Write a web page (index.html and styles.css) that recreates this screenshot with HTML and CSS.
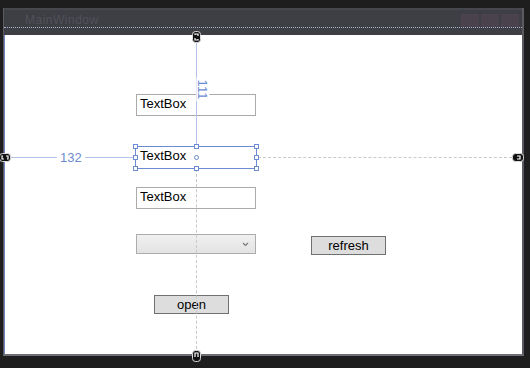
FILE: index.html
```html
<!DOCTYPE html>
<html lang="en">
<head>
  <meta charset="UTF-8" />
  <title>MainWindow - Designer</title>
  <link rel="stylesheet" href="styles.css">
</head>
<body>
  <div class="window">
    <div class="titlebar">
      <span class="title">MainWindow</span>
      <div class="caption-buttons">
        <span></span><span></span><span></span>
      </div>
    </div>
    <div class="client">
      <!-- controls on the canvas -->
      <div class="textbox tb1">TextBox</div>
      <div class="textbox tb2 selected">TextBox</div>
      <div class="textbox tb3">TextBox</div>
      <div class="combo">
        <svg class="chevron" width="7" height="5" viewBox="0 0 7 5"><path d="M1 1 L3.5 3.5 L6 1" fill="none" stroke="#7a7a7a" stroke-width="1.2"/></svg>
      </div>
      <div class="btn refresh">refresh</div>
      <div class="btn open">open</div>

      <!-- adorner lines, drawn over the controls -->
      <div class="vline-solid"></div>
      <div class="vline-dash"></div>
      <div class="hline-solid"></div>
      <div class="hline-dash"></div>
      <span class="margin-label top-label">111</span>
      <span class="margin-label left-label">132</span>

      <!-- selection frame of the second textbox -->
      <div class="selection">
        <i class="handle h-tl"></i><i class="handle h-tm"></i><i class="handle h-tr"></i>
        <i class="handle h-ml"></i><i class="handle h-mr"></i>
        <i class="handle h-bl"></i><i class="handle h-bm"></i><i class="handle h-br"></i>
        <i class="center-dot"></i>
      </div>

      <!-- anchor pins -->
      <svg class="pin pin-top" width="9" height="12" viewBox="0 0 9 12"><rect x="0.5" y="0.5" width="8" height="11" rx="3" fill="#111" stroke="#ddd"/><path d="M3 4 V3 H6 V5 M6 8 V9 H3 V7" fill="none" stroke="#fff" stroke-width="1.2"/></svg>
      <svg class="pin pin-bottom" width="9" height="12" viewBox="0 0 9 12"><rect x="0.5" y="0.5" width="8" height="11" rx="3" fill="#111" stroke="#ddd"/><path d="M3 7 V3 H6 V7" fill="none" stroke="#fff" stroke-width="1.2"/></svg>
      <svg class="pin pin-left" width="12" height="9" viewBox="0 0 12 9"><rect x="0.5" y="0.5" width="11" height="8" rx="3" fill="#111" stroke="#ddd"/><path d="M4 3 H3 V6 H5 M8 6 H9 V3 H7" fill="none" stroke="#fff" stroke-width="1.2"/></svg>
      <svg class="pin pin-right" width="12" height="9" viewBox="0 0 12 9"><rect x="0.5" y="0.5" width="11" height="8" rx="3" fill="#111" stroke="#ddd"/><path d="M5 3 H8 V6 H5" fill="none" stroke="#fff" stroke-width="1.2"/></svg>
    </div>
  </div>
</body>
</html>
```

FILE: styles.css
```css
* {
  box-sizing: border-box;
}
body {
  margin: 0;
  background: #1e1e1e;
  font-family: 'Liberation Sans', Arial, sans-serif;
  width: 530px;
  height: 368px;
  overflow: hidden;
}
.window {
  margin: 8px 0 0 3px;
  width: 521px;
  border-right: 2px solid #5a5a60;
  border-bottom: 2px solid #6e6e74;
  border-left: 1px solid #5a5a60;
  background: #3f3f46;
}
.titlebar {
  height: 27px;
  display: flex;
  justify-content: space-between;
  align-items: flex-start;
  background: #3e3e45;
  border-top: 2px solid #47474e;
  position: relative;
}
.titlebar::after {
  content: '';
  position: absolute;
  left: 0;
  right: 0;
  top: 17px;
  border-top: 1px dotted #a9b3cf;
}
.title {
  margin: 3px 0 0 21px;
  font-size: 12px;
  color: #515158;
  letter-spacing: 0.5px;
}
.caption-buttons {
  display: flex;
  gap: 2px;
  margin: 4px 3px 0 0;
}
.caption-buttons span {
  width: 18px;
  height: 13px;
  background: #4a434d;
}
.client {
  position: relative;
  height: 319px;
  background: #fff;
  border-left: 1px solid #6d83c4;
}
.vline-solid {
  position: absolute;
  left: 191px;
  top: 0;
  height: 111px;
  border-left: 1px solid #b3c2e6;
}
.vline-dash {
  position: absolute;
  left: 191px;
  top: 134px;
  bottom: 0;
  border-left: 1px dashed #c9c9c9;
}
.hline-solid {
  position: absolute;
  top: 122px;
  left: 0;
  width: 131px;
  border-top: 1px solid #b3c2e6;
}
.hline-dash {
  position: absolute;
  top: 122px;
  left: 253px;
  right: 0;
  border-top: 1px dashed #c9c9c9;
}
.margin-label {
  position: absolute;
  font-size: 13px;
  color: #6d8bd2;
  background: #fff;
  line-height: 13px;
}
.left-label {
  left: 52px;
  top: 116px;
  padding: 0 3px;
}
.top-label {
  left: 186px;
  top: 48px;
  transform: rotate(90deg);
  transform-origin: 50% 50%;
  padding: 0 2px;
}
.textbox {
  position: absolute;
  width: 120px;
  height: 22px;
  border: 1px solid #ababab;
  background: #fff;
  font-size: 13px;
  line-height: 16px;
  padding: 1px 0 0 3px;
  color: #000;
}
.tb1 { left: 131px; top: 59px; }
.tb3 { left: 131px; top: 152px; }
.tb2 {
  left: 130px;
  top: 111px;
  width: 122px;
  height: 23px;
  border-color: #6d8bd2;
  padding-left: 4px;
}
.selection {
  position: absolute;
  left: 130px;
  top: 111px;
  width: 122px;
  height: 23px;
}
.handle {
  position: absolute;
  width: 5px;
  height: 5px;
  border: 1px solid #6d8bd2;
  background: #fff;
}
.h-tl { left: -2px; top: -2px; }
.h-tm { left: 59px; top: -2px; }
.h-tr { right: -2px; top: -2px; }
.h-ml { left: -2px; top: 9px; }
.h-mr { right: -2px; top: 9px; }
.h-bl { left: -2px; bottom: -2px; }
.h-bm { left: 59px; bottom: -2px; }
.h-br { right: -2px; bottom: -2px; }
.center-dot {
  position: absolute;
  left: 59px;
  top: 9px;
  width: 5px;
  height: 5px;
  border: 1px solid #6d8bd2;
  border-radius: 50%;
  background: #fff;
}
.combo {
  position: absolute;
  left: 131px;
  top: 199px;
  width: 120px;
  height: 20px;
  border: 1px solid #acacac;
  background: linear-gradient(#f0f0f0, #e3e3e3);
}
.chevron {
  position: absolute;
  right: 6px;
  top: 7px;
}
.btn {
  position: absolute;
  width: 75px;
  height: 19px;
  border: 1px solid #707070;
  background: #dddddd;
  font-size: 13px;
  line-height: 17px;
  text-align: center;
  color: #000;
}
.refresh { left: 306px; top: 201px; }
.open { left: 149px; top: 260px; }
.pin {
  position: absolute;
}
.pin-top { left: 187px; top: -4px; }
.pin-bottom { left: 187px; bottom: -8px; }
.pin-left { left: -6px; top: 118px; }
.pin-right { right: -2px; top: 118px; }
```
